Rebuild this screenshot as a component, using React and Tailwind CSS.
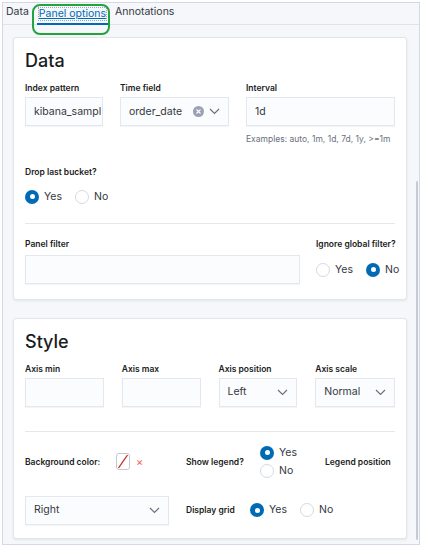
import React from "react";

const Chevron = ({ className = "" }) => (
  <svg width="11" height="7" viewBox="0 0 11 7" className={className}>
    <path d="M1 1l4.5 4.5L10 1" fill="none" stroke="#69707d" strokeWidth="1.2" />
  </svg>
);

const Radio = ({ checked, label }) => (
  <div className="flex items-center gap-[5px]">
    {checked ? (
      <span className="w-[14px] h-[14px] rounded-full bg-[#006bb4] flex items-center justify-center">
        <span className="w-[5px] h-[5px] rounded-full bg-white" />
      </span>
    ) : (
      <span className="w-[14px] h-[14px] rounded-full bg-white border border-[#d3dae6]" />
    )}
    <span className="text-[10.5px] text-[#343741]">{label}</span>
  </div>
);

const Label = ({ children, className = "" }) => (
  <div className={"text-[8.5px] font-semibold text-[#1a1c21] leading-[12px] whitespace-nowrap " + className}>{children}</div>
);

const Input = ({ className = "", children }) => (
  <div
    className={
      "h-[29px] bg-[#fbfcfd] border border-[#e4e8ee] shadow-[0_1px_1px_rgba(0,0,0,0.04)] flex items-center px-[8px] text-[10.5px] text-[#343741] overflow-hidden whitespace-nowrap " +
      className
    }
  >
    {children}
  </div>
);

export default function App() {
  return (
    <div
      className="w-[423px] h-[547px] bg-white p-[2px] relative"
      style={{ fontFamily: "Inter, 'Noto Sans', sans-serif" }}
    >
      <div className="h-[543px] w-[418px] border border-[#d3dae6] bg-[#f5f7fa] flex flex-col relative">
        {/* tabs */}
        <div className="h-[22px] border-b border-[#dfe3ea] flex items-end text-[10.5px] text-[#343741] shrink-0">
          <div className="pl-[3px] pr-[8px] pb-[4px]">Data</div>
          <div className="h-full border-b-2 border-[#006bb4] px-[2px] flex items-center -mb-[1px]">
            <span className="text-[#006bb4] underline outline outline-1 outline-dotted outline-[#9aa5b5] leading-[12px]">
              Panel options
            </span>
          </div>
          <div className="pl-[7px] pb-[4px]">Annotations</div>
        </div>

        <div className="flex-1 flex">
          <div className="flex-1 pl-[10px] pt-[12px] flex flex-col gap-[18px]">
            {/* Data card */}
            <div className="w-[394px] bg-white border border-[#e1e5ec] rounded-[3px] shadow-[0_1px_3px_rgba(0,0,0,0.08)] px-[11px] pt-[11px] pb-[15px]">
              <div className="text-[18px] leading-[24px] font-medium text-[#1a1c21]">Data</div>
              <div className="flex gap-[17px] mt-[9px]">
                <div className="w-[78px]">
                  <Label>Index pattern</Label>
                  <Input className="mt-[3px]">kibana_sampl</Input>
                </div>
                <div className="w-[109px]">
                  <Label>Time field</Label>
                  <Input className="mt-[3px] justify-between">
                    <span>order_date</span>
                    <span className="flex items-center gap-[5px]">
                      <span className="w-[11px] h-[11px] rounded-full bg-[#98a2b3] flex items-center justify-center">
                        <svg width="5" height="5" viewBox="0 0 5 5">
                          <path d="M0.5 0.5l4 4M4.5 0.5l-4 4" stroke="white" strokeWidth="1.1" />
                        </svg>
                      </span>
                      <Chevron />
                    </span>
                  </Input>
                </div>
                <div className="w-[149px]">
                  <Label>Interval</Label>
                  <Input className="mt-[3px]">1d</Input>
                  <div className="text-[8.5px] text-[#69707d] mt-[7px] leading-[12px] whitespace-nowrap">
                    Examples: auto, 1m, 1d, 7d, 1y, &gt;=1m
                  </div>
                </div>
              </div>
              <Label className="mt-[21px]">Drop last bucket?</Label>
              <div className="flex gap-[13px] mt-[11px]">
                <Radio checked label="Yes" />
                <Radio label="No" />
              </div>
              <div className="h-px bg-[#e4e8ee] mt-[18px]" />
              <div className="flex justify-between mt-[14px]">
                <div className="w-[275px]">
                  <Label>Panel filter</Label>
                  <Input className="mt-[5px]" />
                </div>
                <div className="w-[79px]">
                  <Label>Ignore global filter?</Label>
                  <div className="flex gap-[13px] mt-[12px]">
                    <Radio label="Yes" />
                    <Radio checked label="No" />
                  </div>
                </div>
              </div>
            </div>

            {/* Style card */}
            <div className="w-[394px] bg-white border border-[#e1e5ec] rounded-[3px] shadow-[0_1px_3px_rgba(0,0,0,0.08)] px-[11px] pt-[11px] pb-[13px]">
              <div className="text-[18px] leading-[24px] font-medium text-[#1a1c21]">Style</div>
              <div className="flex gap-[18px] mt-[9px]">
                <div className="w-[79px]">
                  <Label>Axis min</Label>
                  <Input className="mt-[3px]" />
                </div>
                <div className="w-[79px]">
                  <Label>Axis max</Label>
                  <Input className="mt-[3px]" />
                </div>
                <div className="w-[79px]">
                  <Label>Axis position</Label>
                  <Input className="mt-[3px] justify-between">
                    <span>Left</span>
                    <Chevron />
                  </Input>
                </div>
                <div className="w-[80px]">
                  <Label>Axis scale</Label>
                  <Input className="mt-[3px] justify-between">
                    <span>Normal</span>
                    <Chevron />
                  </Input>
                </div>
              </div>
              <div className="h-px bg-[#e4e8ee] mt-[24px]" />
              <div className="flex items-center h-[36px] mt-[12px]">
                <Label className="w-[91px]">Background color:</Label>
                <div className="w-[14px] h-[17px] border border-[#c2c9d4] rounded-[3px] relative overflow-hidden bg-white">
                  <svg width="14" height="17" viewBox="0 0 14 17" className="absolute -left-px -top-px">
                    <path d="M2.5 15L11.5 2" stroke="#bd271e" strokeWidth="1.3" />
                  </svg>
                </div>
                <span className="text-[#e7664c] text-[11px] ml-[6px] w-[50px]">×</span>
                <Label className="w-[74px]">Show legend?</Label>
                <div className="flex flex-col gap-[2px] w-[65px]">
                  <Radio checked label="Yes" />
                  <Radio label="No" />
                </div>
                <Label>Legend position</Label>
              </div>
              <div className="flex items-center mt-[16px]">
                <Input className="w-[144px] h-[28px] justify-between">
                  <span>Right</span>
                  <Chevron />
                </Input>
                <Label className="ml-[17px] w-[64px]">Display grid</Label>
                <div className="flex gap-[13px]">
                  <Radio checked label="Yes" />
                  <Radio label="No" />
                </div>
              </div>
            </div>
          </div>
          {/* scrollbar */}
          <div className="w-[10px] flex justify-end pr-[1px] pt-[156px] pb-[4px]">
            <div className="w-[2px] bg-[#c8ccd2] rounded-full h-full" />
          </div>
        </div>
      </div>
      {/* green annotation */}
      <div className="absolute left-[32px] top-[4px] w-[78px] h-[31px] border-2 border-[#22a33c] rounded-[8px] pointer-events-none" />
    </div>
  );
}
